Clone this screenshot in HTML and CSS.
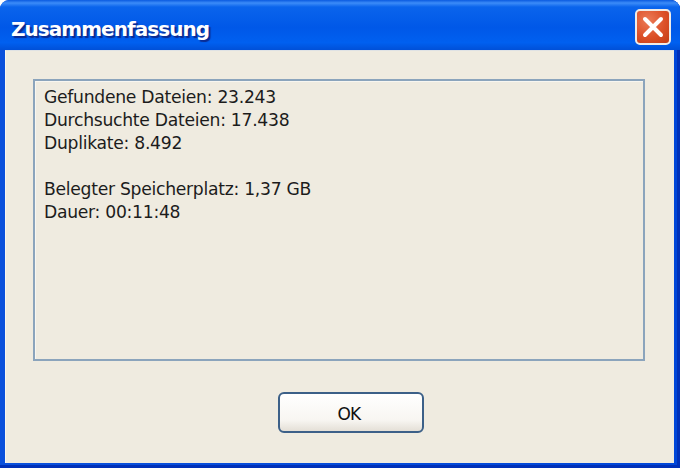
FILE: index.html
```html
<!DOCTYPE html>
<html lang="de">
<head>
<meta charset="utf-8">
<title>Zusammenfassung</title>
<link rel="stylesheet" href="styles.css">
</head>
<body>
<div class="window">
  <header class="titlebar">
    <h1 class="title">Zusammenfassung</h1>
    <button class="close" aria-label="Schließen">
      <svg width="24" height="24" viewBox="0 0 24 24"><path d="M4 4L20 20M20 4L4 20" stroke="#fff" stroke-width="4" stroke-linecap="round"/></svg>
    </button>
  </header>
  <main class="client">
    <div class="summary">
      <p class="line">Gefundene Dateien: 23.243</p>
      <p class="line">Durchsuchte Dateien: 17.438</p>
      <p class="line">Duplikate: 8.492</p>
      <p class="line blank">&nbsp;</p>
      <p class="line">Belegter Speicherplatz: 1,37 GB</p>
      <p class="line">Dauer: 00:11:48</p>
    </div>
    <div class="actions"><button class="ok">OK</button></div>
  </main>
</div>
</body>
</html>
```
FILE: styles.css
```css
* { box-sizing: border-box; }
html, body { margin: 0; padding: 0; background: #fff; }
.window {
  width: 680px;
  height: 468px;
  display: flex;
  flex-direction: column;
  padding: 0 6px 5px 5px;
  border-radius: 9px 9px 0 0;
  background: linear-gradient(90deg, #0a50dc 0, #0a50dc 3px, #0046d8 100%);
  box-shadow: inset -3px 0 0 #0030b8, inset 0 -3px 0 #0030b8;
  overflow: hidden;
}
.titlebar {
  flex: none;
  height: 50px;
  margin: 0 -6px 0 -5px;
  padding: 9px 9px 0 11px;
  display: flex;
  align-items: flex-start;
  justify-content: space-between;
  background: linear-gradient(180deg, #0a5ae0 0, #3c8cf8 6%, #0a64ec 14%, #0058e8 55%, #0060f0 85%, #0050d8 100%);
}
.title {
  margin: 5px 0 0;
  font: bold 20px/30px "DejaVu Sans", sans-serif;
  letter-spacing: -0.95px;
  color: #fff;
  text-shadow: 2px 2px 1px #0a2a90;
}
.close {
  width: 36px;
  height: 36px;
  padding: 0;
  display: flex;
  align-items: center;
  justify-content: center;
  border: 2px solid #f0ece8;
  border-radius: 5px;
  background: radial-gradient(circle at 35% 30%, #ec7c58 0, #dc5028 55%, #c23c14 100%);
}
.client {
  flex: 1;
  padding: 28px 29px 0 27px;
  display: flex;
  flex-direction: column;
  background: #efebe0;
  border-left: 1px solid #f8f6f0;
  border-top: 1px solid #dfe2e4;
}
.summary {
  height: 282px;
  padding: 5px 9px;
  border: 2px solid #8ba4bc;
  box-shadow: 1px 1px 0 #f8f6f0 inset;
}
.line {
  margin: 0;
  font: 17.2px/22.9px "DejaVu Sans", sans-serif;
  letter-spacing: -0.28px;
  color: #1c1c1c;
}
.actions {
  margin-top: 31px;
  display: flex;
  justify-content: center;
  padding-left: 24px;
}
.ok {
  width: 146px;
  height: 41px;
  padding: 3px 4px 0 0;
  font: 17px/1 "DejaVu Sans", sans-serif;
  letter-spacing: -0.7px;
  color: #111;
  border: 2px solid #3c6088;
  border-radius: 6px;
  background: linear-gradient(180deg, #fff 0, #f8f6f2 70%, #e4dfd6 100%);
}
```
